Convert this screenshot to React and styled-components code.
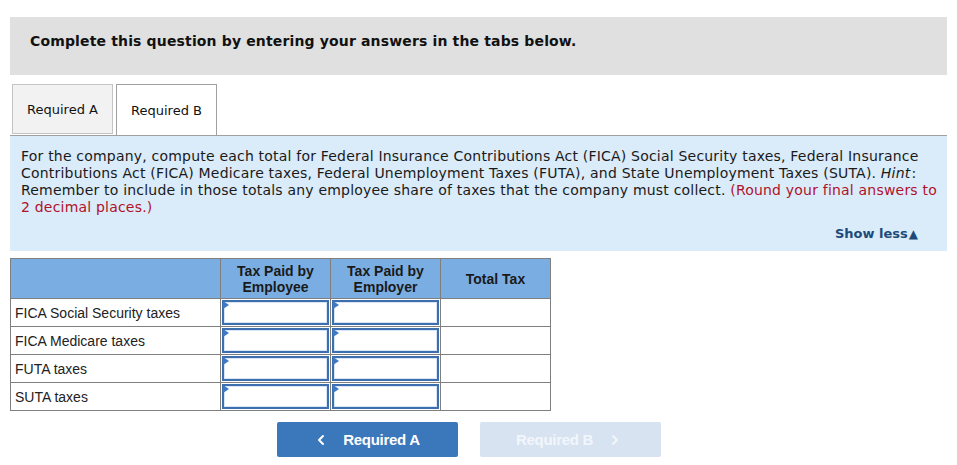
import React from 'react';
import styled, { createGlobalStyle } from 'styled-components';
import { ChevronLeft, ChevronRight } from 'lucide-react';

const rows = [
    "FICA Social Security taxes",
    "FICA Medicare taxes",
    "FUTA taxes",
    "SUTA taxes"
];

const GlobalStyle = createGlobalStyle`
    body {
        margin: 0;
        background: #fff;
        font-family: "DejaVu Sans", Verdana, sans-serif;
        color: #1a1a1a;
    }
`

function EntryCell() {
    return (
        <InputCell>
            <InputBox>
                <Flag />
            </InputBox>
        </InputCell>
    );
}

export default function App() {
    return (
        <Page>
            <GlobalStyle />

            <Banner>Complete this question by entering your answers in the tabs below.</Banner>

            <TabBar>
                <Tab>Required A</Tab>
                <Tab active>Required B</Tab>
            </TabBar>

            <Panel>
                <Prompt>
                    For the company, compute each total for Federal Insurance Contributions Act (FICA) Social Security taxes, Federal Insurance Contributions Act (FICA) Medicare taxes, Federal Unemployment Taxes (FUTA), and State Unemployment Taxes (SUTA). <Hint>Hint</Hint>: Remember to include in those totals any employee share of taxes that the company must collect. <Red>(Round your final answers to 2 decimal places.)</Red>
                </Prompt>
                <ShowLess>Show less<Arrow>▲</Arrow></ShowLess>
            </Panel>

            <TaxTable>
                <thead>
                    <tr>
                        <HeadCell wide />
                        <HeadCell>Tax Paid by<br />Employee</HeadCell>
                        <HeadCell>Tax Paid by<br />Employer</HeadCell>
                        <HeadCell>Total Tax</HeadCell>
                    </tr>
                </thead>
                <tbody>
                    {rows.map((label) => (
                        <tr key={label}>
                            <LabelCell>{label}</LabelCell>
                            <EntryCell />
                            <EntryCell />
                            <PlainCell />
                        </tr>
                    ))}
                </tbody>
            </TaxTable>

            <NavRow>
                <NavButton>
                    <ChevronLeft size={16} strokeWidth={3} />
                    Required A
                </NavButton>
                <NavButton disabled>
                    Required B
                    <ChevronRight size={16} strokeWidth={3} />
                </NavButton>
            </NavRow>
        </Page>
    );
}

const Page = styled.div`
    width: 937px;
    padding: 17px 10px 0 10px;
`

const Banner = styled.div`
    background: #e0e0e0;
    height: 58px;
    box-sizing: border-box;
    padding: 16px 0 0 20px;
    font-weight: 700;
    font-size: 14px;
    line-height: 17px;
    color: #111;
    letter-spacing: 0.15px;
`

const TabBar = styled.div`
    display: flex;
    gap: 3px;
    margin-top: 9px;
    padding-left: 2px;
    border-bottom: 1px solid #a0a0a0;
    height: 51px;
`

const Tab = styled.div`
    width: 101px;
    height: ${props => props.active ? '51px' : '50px'};
    display: flex;
    align-items: center;
    justify-content: center;
    font-size: 13px;
    color: #111;
    background: ${props => props.active ? '#fff' : '#f2f2f2'};
    border: 1px solid ${props => props.active ? '#a0a0a0' : '#c4c4c4'};
    border-bottom: ${props => props.active ? 'none' : '1px solid #c4c4c4'};
    box-sizing: border-box;
    position: relative;
    z-index: ${props => props.active ? 1 : 0};
    margin-bottom: ${props => props.active ? '-1px' : '0'};
`

const Panel = styled.div`
    background: #daebf9;
    padding: 12px 6px 9px 11px;
    display: flex;
    flex-direction: column;
`

const Prompt = styled.div`
    font-size: 14px;
    line-height: 17px;
    letter-spacing: 0.2px;
    color: #1a1a1a;
`

const Hint = styled.i`
    padding-right: 1px;
`

const Red = styled.span`
    color: #b0122a;
`

const ShowLess = styled.div`
    align-self: flex-end;
    margin-top: 10px;
    margin-right: 23px;
    font-weight: 700;
    font-size: 13px;
    line-height: 16px;
    color: #1d4a7a;
    display: flex;
    align-items: center;
`

const Arrow = styled.span`
    font-size: 12px;
    margin-left: 1px;
`

const TaxTable = styled.table`
    margin-top: 7px;
    border-collapse: collapse;
    font-family: "Liberation Sans", Arial, sans-serif;
    font-size: 14px;
    table-layout: fixed;
    width: 541px;

    td, th {
        border: 1px solid #7f7f7f;
        padding: 0;
    }
`

const HeadCell = styled.th`
    width: ${props => props.wide ? '209px' : '109px'};
    height: 39px;
    background: #7aaee3;
    font-weight: 700;
    color: #1a1a1a;
    line-height: 16px;
    text-align: center;
`

const LabelCell = styled.td`
    height: 27px;
    padding-left: 4px !important;
    color: #222;
`

const PlainCell = styled.td`
    background: #fff;
`

const InputCell = styled.td`
    padding: 0;
`

const InputBox = styled.div`
    position: relative;
    height: 21px;
    margin: 1px;
    border: 2px solid #3d6fae;
    box-shadow: inset 0 0 0 1px #d6e6f7;
    background: #fff;
`

const Flag = styled.span`
    position: absolute;
    left: -1px;
    top: -1px;
    width: 0;
    height: 0;
    border-top: 4px solid transparent;
    border-bottom: 4px solid transparent;
    border-left: 6px solid #3d79c4;
`

const NavRow = styled.div`
    display: flex;
    gap: 22px;
    margin-top: 11px;
    padding-left: 267px;
`

const NavButton = styled.button`
    width: 181px;
    height: 35px;
    border: none;
    border-radius: 2px;
    display: flex;
    align-items: center;
    justify-content: center;
    gap: 14px;
    padding-right: 8px;
    font-family: "Liberation Sans", Arial, sans-serif;
    font-weight: 700;
    font-size: 15px;
    letter-spacing: -0.3px;
    color: ${props => props.disabled ? '#f2f6fb' : '#fff'};
    background: ${props => props.disabled ? '#d7e3f1' : '#3a77bb'};
    cursor: ${props => props.disabled ? 'default' : 'pointer'};
`
